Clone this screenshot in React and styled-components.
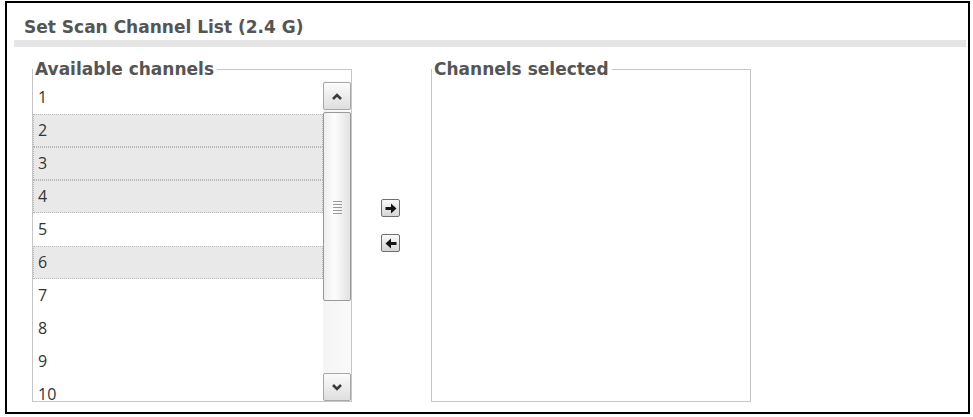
import React from "react";
import styled, { createGlobalStyle } from "styled-components";

const Global = createGlobalStyle`
  html, body { margin: 0; padding: 0; background: #fff; }
  body { font-family: "Open Sans", "Noto Sans", sans-serif; }
`;

const Page = styled.div`
  padding: 1px 0 0 5px;
`;

const Frame = styled.div`
  box-sizing: border-box;
  width: 965px;
  height: 413px;
  border: 2px solid #000;
  background: #fff;
  overflow: hidden;
`;

const Title = styled.div`
  margin: 0 2px 0 7px;
  padding: 14px 0 3px 10px;
  height: 20px;
  line-height: 20px;
  font-family: "DejaVu Sans", sans-serif;
  font-size: 17px;
  font-weight: 700;
  color: #555;
  white-space: nowrap;
  border-bottom: 7px solid #e5e5e5;
`;

const Body = styled.div`
  display: flex;
  align-items: flex-start;
  padding: 12px 0 0 25px;
`;

const Group = styled.fieldset`
  margin: 0;
  padding: 0;
  width: 320px;
  box-sizing: border-box;
  border: 1px solid #c6c6c6;
  border-radius: 0;
  min-width: 0;
`;

const Legend = styled.legend`
  padding: 0 3px 0 2px;
  margin: 0;
  font-family: "DejaVu Sans", sans-serif;
  font-size: 17px;
  line-height: 20px;
  font-weight: 700;
  color: #555;
  white-space: nowrap;
`;

const ListBox = styled.div`
  display: flex;
  margin-top: 2px;
  height: 320px;
  overflow: hidden;
`;

const Rows = styled.div`
  flex: 1;
  display: flex;
  flex-direction: column;
`;

const Row = styled.div`
  flex: 0 0 auto;
  box-sizing: border-box;
  height: 33px;
  line-height: 31px;
  padding-left: 4px;
  font-size: 16px;
  color: #333;
  border: 1px dotted ${(p) => (p.$sel ? "#b8b8b8" : "transparent")};
  background: ${(p) => (p.$sel ? "#e9e9e9" : "transparent")};
`;

const ScrollBar = styled.div`
  width: 28px;
  display: flex;
  flex-direction: column;
  padding-top: 1px;
  background: linear-gradient(to right, #f4f4f4, #fafafa);
`;

const ScrollBtn = styled.div`
  box-sizing: border-box;
  height: 28px;
  border: 1px solid #a8a8a8;
  border-radius: 2px;
  background: linear-gradient(to bottom, #fbfbfb, #dedede);
  display: flex;
  align-items: center;
  justify-content: center;
`;

const Thumb = styled.div`
  box-sizing: border-box;
  height: 189px;
  margin-top: 2px;
  border: 1px solid #9a9a9a;
  border-radius: 2px;
  background: linear-gradient(to right, #eeeeee, #fdfdfd 40%, #e2e2e2);
  display: flex;
  align-items: center;
  justify-content: center;
`;

const Track = styled.div`
  flex: 1;
`;

const Grip = styled.div`
  width: 9px;
  height: 13px;
  background: repeating-linear-gradient(to bottom, #999 0 1px, transparent 1px 3px);
  margin-top: 2px;
`;

const Mover = styled.div`
  box-sizing: border-box;
  width: 79px;
  padding: 140px 0 0 29px;
  display: flex;
  flex-direction: column;
  gap: 17px;
`;

const MoveBtn = styled.button`
  box-sizing: border-box;
  width: 19px;
  height: 18px;
  padding: 0;
  border: 1px solid #6f6f6f;
  border-radius: 2px;
  background: linear-gradient(to bottom, #fafafa, #d6d6d6);
  display: flex;
  align-items: center;
  justify-content: center;
  cursor: pointer;
`;

const Chevron = ({ up }) => (
  <svg width="12" height="8" viewBox="0 0 12 8">
    <path
      d={up ? "M2 7 L6 3 L10 7" : "M2 2 L6 6 L10 2"}
      fill="none"
      stroke="#3c3c3c"
      strokeWidth="2.6"
    />
  </svg>
);

const Arrow = ({ left }) => (
  <svg width="12" height="11" viewBox="0 0 12 11">
    <g transform={left ? "translate(12 0) scale(-1 1)" : undefined}>
      <path d="M0.5 4 H6 V0.5 L11.5 5.5 L6 10.5 V7 H0.5 Z" fill="#151515" />
    </g>
  </svg>
);

const channels = [1, 2, 3, 4, 5, 6, 7, 8, 9, 10];
const selected = new Set([2, 3, 4, 6]);

export default function App() {
  return (
    <Page>
      <Global />
      <Frame>
        <Title>Set Scan Channel List (2.4 G)</Title>
        <Body>
          <Group>
            <Legend>Available channels</Legend>
            <ListBox>
              <Rows>
                {channels.map((c) => (
                  <Row key={c} $sel={selected.has(c)}>
                    {c}
                  </Row>
                ))}
              </Rows>
              <ScrollBar>
                <ScrollBtn>
                  <Chevron up />
                </ScrollBtn>
                <Thumb>
                  <Grip />
                </Thumb>
                <Track />
                <ScrollBtn>
                  <Chevron />
                </ScrollBtn>
              </ScrollBar>
            </ListBox>
          </Group>
          <Mover>
            <MoveBtn aria-label="Add">
              <Arrow />
            </MoveBtn>
            <MoveBtn aria-label="Remove">
              <Arrow left />
            </MoveBtn>
          </Mover>
          <Group>
            <Legend>Channels selected</Legend>
            <ListBox />
          </Group>
        </Body>
      </Frame>
    </Page>
  );
}
